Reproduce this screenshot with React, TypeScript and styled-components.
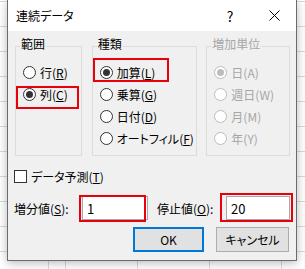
import React from "react";
import styled, { createGlobalStyle } from "styled-components";

const GlobalStyle = createGlobalStyle`
  html, body {
    margin: 0;
    padding: 0;
  }
  body {
    font-family: "Segoe UI", "Noto Sans CJK JP", sans-serif;
    font-feature-settings: "palt";
  }
`;

const Sheet = styled.div`
  width: 305px;
  height: 269px;
  overflow: hidden;
  box-sizing: border-box;
  padding-left: 7px;
  background-color: #fff;
  background-image:
    repeating-linear-gradient(to bottom, #d9d9d9 0 1px, transparent 1px 25px),
    repeating-linear-gradient(to right, #d9d9d9 0 1px, transparent 1px 72px);
  background-position: 0 1px, 65px 0;
`;

const Dialog = styled.div`
  width: 290px;
  box-sizing: border-box;
  border: 1px solid #6b6b6b;
  border-top: none;
  background: #f0f0f0;
  box-shadow: 0 2px 9px rgba(0, 0, 0, 0.28);
  font-size: 12px;
  color: #000;
`;

const TitleBar = styled.div`
  height: 31px;
  display: flex;
  align-items: center;
  padding-left: 8px;
  background: #fff;
`;

const Title = styled.div`
  flex: 1;
  font-size: 12px;
`;

const TitleButton = styled.div`
  width: 44px;
  height: 31px;
  display: flex;
  align-items: center;
  justify-content: center;
  font-size: 14px;
`;

const Body = styled.div`
  padding: 5px 6px 8px 7px;
  display: flex;
  flex-direction: column;
`;

const Groups = styled.div`
  display: flex;
`;

const Group = styled.fieldset<{ $w: number; $gap?: number }>`
  width: ${p => p.$w}px;
  margin: 0 0 0 ${p => p.$gap ?? 0}px;
  padding: 5px 0 6px;
  min-width: 0;
  box-sizing: border-box;
  border: 1px solid #dcdcdc;
`;

const Legend = styled.legend<{ $disabled?: boolean }>`
  margin-left: 4px;
  padding: 0 1px 4px;
  line-height: 16px;
  color: ${p => (p.$disabled ? "#a6a6a6" : "#000")};
`;

const Option = styled.div<{ $disabled?: boolean }>`
  position: relative;
  display: flex;
  align-items: center;
  height: 22px;
  padding-left: 7px;
  color: ${p => (p.$disabled ? "#a6a6a6" : "#000")};
`;

const RadioCircle = styled.span<{ $checked?: boolean; $disabled?: boolean }>`
  width: 13px;
  height: 13px;
  box-sizing: border-box;
  border-radius: 50%;
  border: 1px solid ${p => (p.$disabled ? "#bcbcbc" : "#333")};
  background: #fff;
  margin-right: 4px;
  display: flex;
  align-items: center;
  justify-content: center;

  &::after {
    content: "";
    display: ${p => (p.$checked ? "block" : "none")};
    width: 7px;
    height: 7px;
    border-radius: 50%;
    background: ${p => (p.$disabled ? "#bcbcbc" : "#333")};
  }
`;

const Key = styled.u`
  text-decoration: underline;
  text-underline-offset: 1px;
`;

const Highlight = styled.span<{ $top: number; $left: number; $w: number; $h: number }>`
  position: absolute;
  top: ${p => p.$top}px;
  left: ${p => p.$left}px;
  width: ${p => p.$w}px;
  height: ${p => p.$h}px;
  box-sizing: border-box;
  border: 2px solid #e8000b;
  pointer-events: none;
`;

const CheckRow = styled.div`
  display: flex;
  align-items: center;
  height: 18px;
  margin: 11px 0 0 -1px;
`;

const CheckBox = styled.span`
  width: 13px;
  height: 13px;
  box-sizing: border-box;
  border: 1px solid #333;
  background: #fff;
  margin-right: 4px;
`;

const FieldRow = styled.div`
  display: flex;
  align-items: center;
  height: 24px;
  margin: 11px 0 0 -1px;
`;

const FieldLabel = styled.span<{ $w: number; $gap?: number }>`
  width: ${p => p.$w}px;
  margin-left: ${p => p.$gap ?? 0}px;
`;

const InputWrap = styled.div<{ $w: number }>`
  position: relative;
  width: ${p => p.$w}px;
  height: 24px;
`;

const Input = styled.div`
  width: 100%;
  height: 100%;
  box-sizing: border-box;
  border: 1px solid #a8a8a8;
  background: #fff;
  padding-left: 4px;
  display: flex;
  align-items: center;
  font-size: 13px;
`;

const ButtonRow = styled.div`
  display: flex;
  justify-content: flex-end;
  gap: 12px;
  margin: 7px 1px 0 0;
`;

const Button = styled.div<{ $w: number; $primary?: boolean }>`
  width: ${p => p.$w}px;
  height: 25px;
  box-sizing: border-box;
  display: flex;
  align-items: center;
  justify-content: center;
  background: #e1e1e1;
  border: ${p => (p.$primary ? "2px solid #0078d7" : "1px solid #adadad")};
  font-size: 12px;
`;

const CloseIcon = () => (
  <svg width="11" height="11" viewBox="0 0 11 11">
    <path d="M0.5 0.5 L10.5 10.5 M10.5 0.5 L0.5 10.5" stroke="#000" strokeWidth="1" fill="none" />
  </svg>
);

interface RadioProps {
  label: string;
  keyChar: string;
  checked?: boolean;
  disabled?: boolean;
  children?: React.ReactNode;
}

const Radio: React.FC<RadioProps> = ({ label, keyChar, checked, disabled, children }) => (
  <Option $disabled={disabled}>
    <RadioCircle $checked={checked} $disabled={disabled} />
    <span>
      {label}({disabled ? keyChar : <Key>{keyChar}</Key>})
    </span>
    {children}
  </Option>
);

export default function App() {
  return (
    <Sheet>
      <GlobalStyle />
      <Dialog>
        <TitleBar>
          <Title>連続データ</Title>
          <TitleButton>?</TitleButton>
          <TitleButton>
            <CloseIcon />
          </TitleButton>
        </TitleBar>
        <Body>
          <Groups>
            <Group $w={67}>
              <Legend>範囲</Legend>
              <Radio label="行" keyChar="R" />
              <Radio label="列" keyChar="C" checked>
                <Highlight $top={3} $left={0} $w={63} $h={23} />
              </Radio>
            </Group>
            <Group $w={106} $gap={10}>
              <Legend>種類</Legend>
              <Radio label="加算" keyChar="L" checked>
                <Highlight $top={-3} $left={0} $w={76} $h={24} />
              </Radio>
              <Radio label="乗算" keyChar="G" />
              <Radio label="日付" keyChar="D" />
              <Radio label="オートフィル" keyChar="F" />
            </Group>
            <Group $w={84} $gap={9}>
              <Legend $disabled>増加単位</Legend>
              <Radio label="日" keyChar="A" checked disabled />
              <Radio label="週日" keyChar="W" disabled />
              <Radio label="月" keyChar="M" disabled />
              <Radio label="年" keyChar="Y" disabled />
            </Group>
          </Groups>

          <CheckRow>
            <CheckBox />
            <span>
              データ予測(<Key>T</Key>)
            </span>
          </CheckRow>

          <FieldRow>
            <FieldLabel $w={68}>
              増分値(<Key>S</Key>):
            </FieldLabel>
            <InputWrap $w={66}>
              <Input>1</Input>
              <Highlight $top={-1} $left={-3} $w={67} $h={27} />
            </InputWrap>
            <FieldLabel $w={69} $gap={9}>
              停止値(<Key>O</Key>):
            </FieldLabel>
            <InputWrap $w={64}>
              <Input>20</Input>
              <Highlight $top={-3} $left={-6} $w={73} $h={29} />
            </InputWrap>
          </FieldRow>

          <ButtonRow>
            <Button $w={71} $primary>OK</Button>
            <Button $w={73}>キャンセル</Button>
          </ButtonRow>
        </Body>
      </Dialog>
    </Sheet>
  );
}
